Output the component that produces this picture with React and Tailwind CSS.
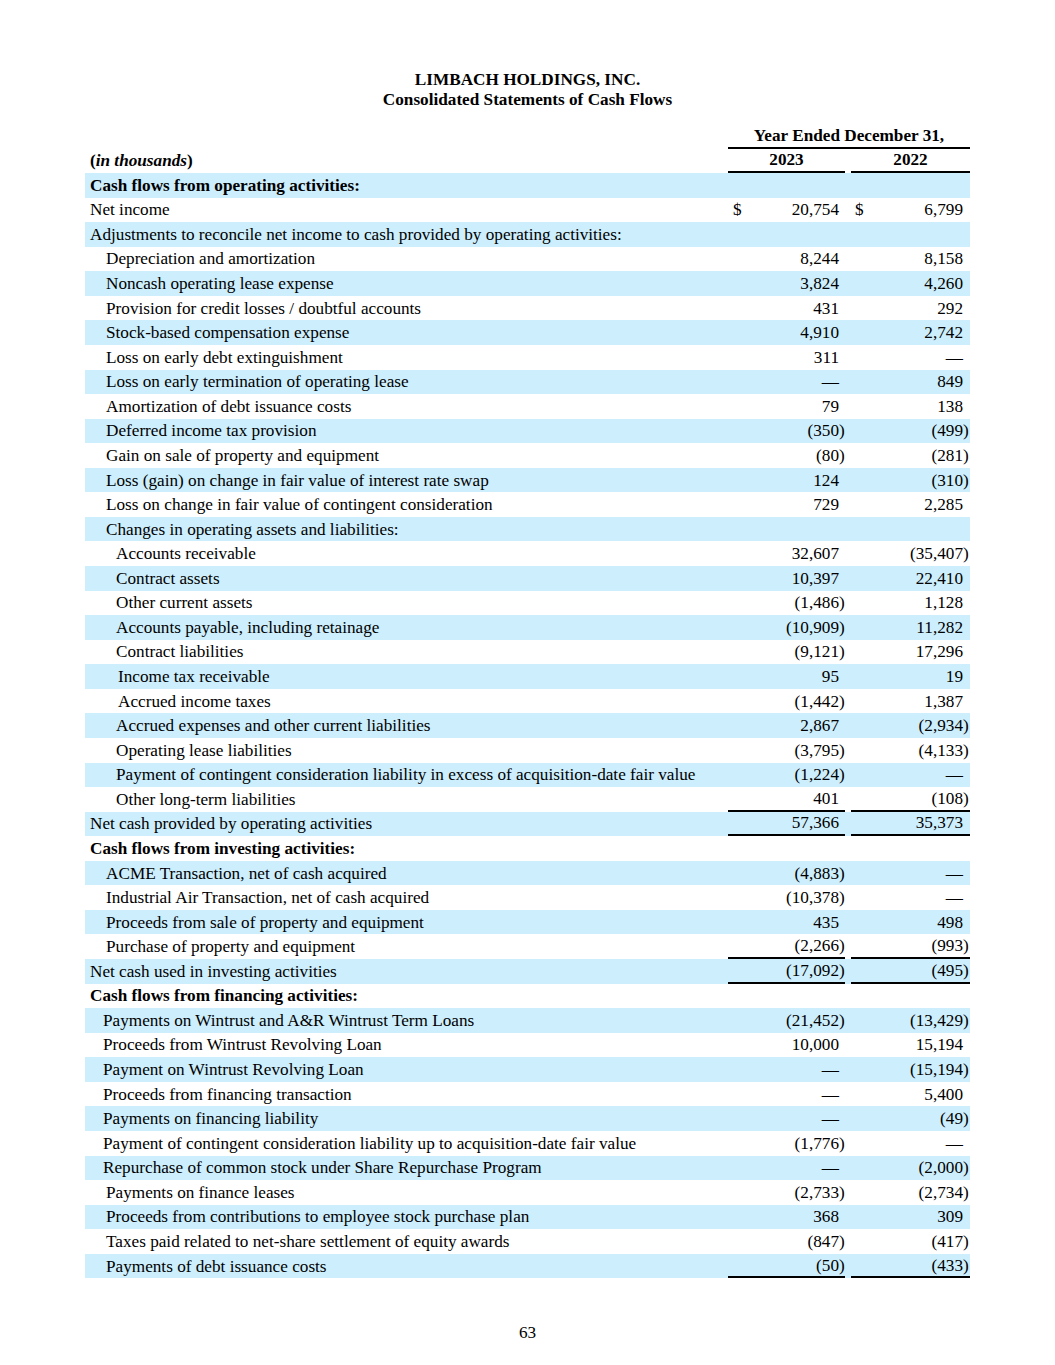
import React from 'react'

const D = '—'

// [label, 2023, 2022, indent, options]
const rows = [
  ['Cash flows from operating activities:', '', '', 0, { bold: true }],
  ['Net income', '20,754', '6,799', 0, { dollar: true }],
  ['Adjustments to reconcile net income to cash provided by operating activities:', '', '', 0],
  ['Depreciation and amortization', '8,244', '8,158', 1],
  ['Noncash operating lease expense', '3,824', '4,260', 1],
  ['Provision for credit losses / doubtful accounts', '431', '292', 1],
  ['Stock-based compensation expense', '4,910', '2,742', 1],
  ['Loss on early debt extinguishment', '311', D, 1],
  ['Loss on early termination of operating lease', D, '849', 1],
  ['Amortization of debt issuance costs', '79', '138', 1],
  ['Deferred income tax provision', '(350)', '(499)', 1],
  ['Gain on sale of property and equipment', '(80)', '(281)', 1],
  ['Loss (gain) on change in fair value of interest rate swap', '124', '(310)', 1],
  ['Loss on change in fair value of contingent consideration', '729', '2,285', 1],
  ['Changes in operating assets and liabilities:', '', '', 1],
  ['Accounts receivable', '32,607', '(35,407)', 2],
  ['Contract assets', '10,397', '22,410', 2],
  ['Other current assets', '(1,486)', '1,128', 2],
  ['Accounts payable, including retainage', '(10,909)', '11,282', 2],
  ['Contract liabilities', '(9,121)', '17,296', 2],
  ['Income tax receivable', '95', '19', 3],
  ['Accrued income taxes', '(1,442)', '1,387', 3],
  ['Accrued expenses and other current liabilities', '2,867', '(2,934)', 2],
  ['Operating lease liabilities', '(3,795)', '(4,133)', 2],
  ['Payment of contingent consideration liability in excess of acquisition-date fair value', '(1,224)', D, 2],
  ['Other long-term liabilities', '401', '(108)', 2, { line: true }],
  ['Net cash provided by operating activities', '57,366', '35,373', 0, { line: true }],
  ['Cash flows from investing activities:', '', '', 0, { bold: true }],
  ['ACME Transaction, net of cash acquired', '(4,883)', D, 1],
  ['Industrial Air Transaction, net of cash acquired', '(10,378)', D, 1],
  ['Proceeds from sale of property and equipment', '435', '498', 1],
  ['Purchase of property and equipment', '(2,266)', '(993)', 1, { line: true }],
  ['Net cash used in investing activities', '(17,092)', '(495)', 0, { line: true }],
  ['Cash flows from financing activities:', '', '', 0, { bold: true }],
  ['Payments on Wintrust and A&R Wintrust Term Loans', '(21,452)', '(13,429)', 4],
  ['Proceeds from Wintrust Revolving Loan', '10,000', '15,194', 4],
  ['Payment on Wintrust Revolving Loan', D, '(15,194)', 4],
  ['Proceeds from financing transaction', D, '5,400', 4],
  ['Payments on financing liability', D, '(49)', 4],
  ['Payment of contingent consideration liability up to acquisition-date fair value', '(1,776)', D, 4],
  ['Repurchase of common stock under Share Repurchase Program', D, '(2,000)', 4],
  ['Payments on finance leases', '(2,733)', '(2,734)', 1],
  ['Proceeds from contributions to employee stock purchase plan', '368', '309', 1],
  ['Taxes paid related to net-share settlement of equity awards', '(847)', '(417)', 1],
  ['Payments of debt issuance costs', '(50)', '(433)', 1, { line: true }],
]

const indents = ['pl-[5px]', 'pl-[21px]', 'pl-[31px]', 'pl-[33px]', 'pl-[18px]']

function Amount({ value, dollar, dollarPad, width, endPad, line }) {
  const paren = value.startsWith('(')
  const body = paren ? value.slice(0, -1) : value
  return (
    <div className={`${width} h-full flex items-center pt-[1px] ${line ? 'border-b-2 border-black' : ''}`}>
      <span className={`${dollarPad} w-[16px]`}>{dollar ? '$' : ''}</span>
      <span className="flex-1 text-right">{body}</span>
      <span className={`${endPad} text-left`}>{paren ? ')' : ''}</span>
    </div>
  )
}

export default function App() {
  return (
    <div
      className="w-[1055px] h-[1365px] bg-white text-black text-[17.2px] leading-[20px]"
      style={{ fontFamily: '"Liberation Serif", "Times New Roman", serif' }}
    >
      <div className="pt-[70px] text-center font-bold">
        <div>LIMBACH HOLDINGS, INC.</div>
        <div>Consolidated Statements of Cash Flows</div>
      </div>

      <div className="ml-[85px] w-[885px] mt-[14px]">
        <div className="flex h-[24.5px]">
          <div className="flex-1" />
          <div className="w-[242px] flex items-center justify-center pt-[1px] font-bold border-b-2 border-black">
            Year Ended December 31,
          </div>
        </div>
        <div className="flex h-[24.5px]">
          <div className="flex-1 flex items-center pt-[1px] pl-[5px] font-bold">
            (<span className="italic">in thousands</span>)
          </div>
          <div className="w-[117px] flex items-center justify-center pt-[1px] font-bold border-b-2 border-black">2023</div>
          <div className="w-[6px]" />
          <div className="w-[119px] flex items-center justify-center pt-[1px] font-bold border-b-2 border-black">2022</div>
        </div>

        {rows.map(([label, a, b, indent, opt = {}], i) => (
          <div key={i} className={`flex h-[24.57px] ${i % 2 === 0 ? 'bg-[#cdeefd]' : ''}`}>
            <div className={`flex-1 flex items-center pt-[1px] whitespace-nowrap ${indents[indent]} ${opt.bold ? 'font-bold' : ''}`}>
              {label}
            </div>
            <Amount value={a} dollar={opt.dollar} dollarPad="pl-[5px]" width="w-[117px]" endPad="w-[6px]" line={opt.line} />
            <div className="w-[6px]" />
            <Amount value={b} dollar={opt.dollar} dollarPad="pl-[4px]" width="w-[119px]" endPad="w-[7px]" line={opt.line} />
          </div>
        ))}
      </div>

      <div className="mt-[45px] text-center">63</div>
    </div>
  )
}
